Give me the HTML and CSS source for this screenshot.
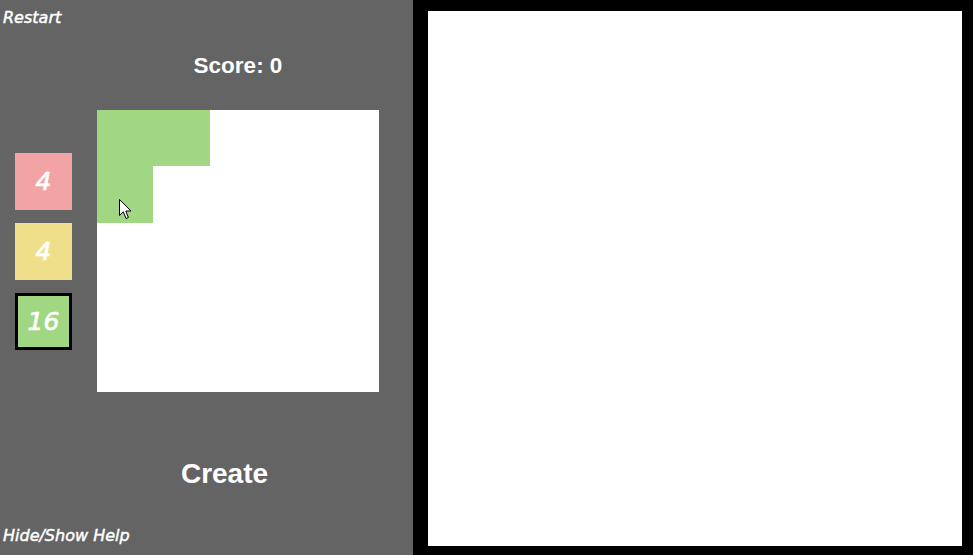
FILE: index.html
```html
<!DOCTYPE html>
<html>
<head>
<meta charset="utf-8">
<link rel="stylesheet" href="styles.css">
</head>
<body>
<div class="app">
  <div class="side">
    <div class="link restart">Restart</div>
    <div class="score">Score: 0</div>
    <div class="game">
      <div class="swatches">
        <div class="swatch pink">4</div>
        <div class="swatch yellow">4</div>
        <div class="swatch green selected">16</div>
      </div>
      <div class="board">
        <div class="cell filled"></div><div class="cell filled"></div><div class="cell"></div><div class="cell"></div><div class="cell"></div>
        <div class="cell filled"></div><div class="cell"></div><div class="cell"></div><div class="cell"></div><div class="cell"></div>
        <div class="cell"></div><div class="cell"></div><div class="cell"></div><div class="cell"></div><div class="cell"></div>
        <div class="cell"></div><div class="cell"></div><div class="cell"></div><div class="cell"></div><div class="cell"></div>
        <div class="cell"></div><div class="cell"></div><div class="cell"></div><div class="cell"></div><div class="cell"></div>
        <svg class="cursor" width="13" height="21" viewBox="0 0 13 21"><path d="M0.5 0.5 L0.5 16.5 L4.3 12.8 L7 19.5 L9.4 18.5 L6.8 12 L12 12 Z" fill="#fff" stroke="#000" stroke-width="1" stroke-linejoin="miter"/></svg>
      </div>
    </div>
    <div class="create">Create</div>
    <div class="link help">Hide/Show Help</div>
  </div>
  <div class="canvas-wrap">
    <div class="canvas"></div>
  </div>
</div>
</body>
</html>
```
FILE: styles.css
```css
html, body {
  margin: 0;
  padding: 0;
  height: 100%;
  overflow: hidden;
}
.app {
  display: flex;
  width: 973px;
  height: 555px;
}
.side {
  width: 413px;
  height: 555px;
  background: #646464;
  box-sizing: border-box;
  padding-top: 8px;
  display: flex;
  flex-direction: column;
  color: #fff;
}
.link {
  font-family: "DejaVu Sans", Verdana, sans-serif;
  font-style: italic;
  font-size: 16px;
  line-height: 20px;
  height: 20px;
  padding-left: 3px;
  color: #fff;
  -webkit-text-stroke: 0.45px #fff;
}
.help {
  margin-top: 34px;
}
.score {
  margin-top: 23px;
  margin-left: 97px;
  width: 282px;
  text-align: center;
  font-family: "Liberation Sans", Arial, sans-serif;
  font-weight: bold;
  font-size: 22.5px;
  line-height: 30px;
  height: 30px;
}
.game {
  margin-top: 29px;
  display: flex;
  height: 282px;
}
.swatches {
  margin-left: 15px;
  padding-top: 43px;
  display: flex;
  flex-direction: column;
  gap: 13px;
}
.swatch {
  width: 57px;
  height: 57px;
  box-sizing: border-box;
  display: flex;
  align-items: center;
  justify-content: center;
  font-family: "DejaVu Sans", Verdana, sans-serif;
  font-style: italic;
  font-size: 25px;
  color: #fff;
  -webkit-text-stroke: 0.7px #fff;
}
.pink { background: #f2a3a3; }
.yellow { background: #f0df8a; }
.green { background: #a1d683; }
.selected { border: 3px solid #000; }
.board {
  position: relative;
  margin-left: 25px;
  width: 282px;
  height: 282px;
  background: #fff;
  display: grid;
  grid-template-columns: repeat(5, 1fr);
  grid-template-rows: repeat(5, 1fr);
}
.cell.filled { background: #a1d683; }
.cursor {
  position: absolute;
  left: 22px;
  top: 89px;
}
.create {
  margin-top: 64px;
  padding-left: 36px;
  text-align: center;
  font-family: "Liberation Sans", Arial, sans-serif;
  font-weight: bold;
  font-size: 28px;
  line-height: 36px;
  height: 36px;
}
.canvas-wrap {
  flex: 1;
  background: #000;
  padding-top: 11px;
  padding-left: 15px;
}
.canvas {
  width: 534px;
  height: 535px;
  background: #fff;
}
```
